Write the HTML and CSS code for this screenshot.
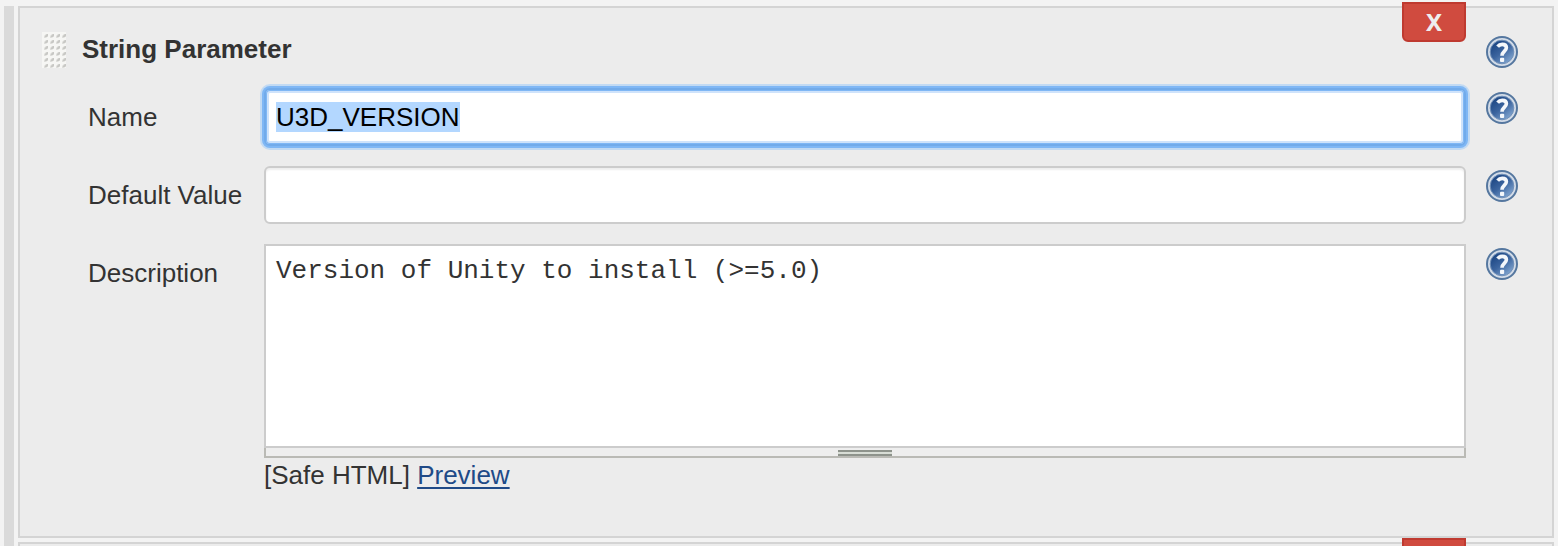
FILE: index.html
```html
<!DOCTYPE html>
<html lang="en">
<head>
<meta charset="utf-8">
<title>String Parameter</title>
<link rel="stylesheet" href="styles.css">
</head>
<body>
<svg class="defs" width="0" height="0" aria-hidden="true">
  <defs>
    <linearGradient id="blue" x1="0.1" y1="0" x2="0.9" y2="1">
      <stop offset="0.15" stop-color="#204a87"/><stop offset="0.5" stop-color="#3c659f"/><stop offset="0.95" stop-color="#86aad4"/>
    </linearGradient>
    <symbol id="help" viewBox="0 0 32 32">
      <circle cx="16" cy="16" r="15" fill="#d3dce8" stroke="#55779f" stroke-width="2"/>
      <circle cx="16" cy="16" r="11.8" fill="url(#blue)" stroke="#7190b8" stroke-width="1"/>
      <path d="M11.6 10.6C12.8 9.1 14.4 8.4 16.2 8.4C18.8 8.4 20.4 9.7 20.4 11.8C20.4 15 16 15.4 16 19.8" fill="none" stroke="#f4f7fb" stroke-width="3.6"/>
      <rect x="14" y="21.8" width="4.2" height="4.2" rx="1" fill="#f4f7fb"/>
    </symbol>
    <pattern id="dots" width="6" height="6" patternUnits="userSpaceOnUse">
      <rect width="6" height="6" fill="#f6f6f4"/>
      <path d="M2 4L4 2H6V4L4 6H2Z" fill="#dededb"/><path d="M3 4L5 2H6V4L5 5H3Z" fill="#c8c8c5"/>
    </pattern>
  </defs>
</svg>
<div class="page">
  <div class="rail"></div>
  <main class="cards">
    <section class="card">
      <button class="remove">X</button>
      <header class="head">
        <svg class="grip"><rect width="24" height="36" fill="url(#dots)"/></svg>
        <h1 class="title">String Parameter</h1>
        <svg class="help"><use href="#help"/></svg>
      </header>
      <div class="row">
        <div class="label">Name</div>
        <div class="input focused"><span class="selected">U3D_VERSION</span></div>
        <svg class="help"><use href="#help"/></svg>
      </div>
      <div class="row">
        <div class="label">Default Value</div>
        <div class="input"></div>
        <svg class="help"><use href="#help"/></svg>
      </div>
      <div class="row">
        <div class="label">Description</div>
        <div class="editor">
          <div class="textarea">Version of Unity to install (&gt;=5.0)</div>
          <div class="resizer"><span class="handle"></span></div>
          <div class="formats">[Safe HTML] <a class="link" href="#">Preview</a></div>
        </div>
        <svg class="help"><use href="#help"/></svg>
      </div>
    </section>
    <section class="card next">
      <button class="remove" aria-label="Remove"></button>
    </section>
  </main>
</div>
</body>
</html>
```
FILE: styles.css
```css
* { box-sizing: border-box; }
body {
  margin: 0;
  height: 546px;
  overflow: hidden;
  background: #f3f3f3;
  color: #333;
  font: 26px/30px "Liberation Sans", Arial, sans-serif;
}
.defs { position: absolute; }
.page { display: flex; gap: 4px; padding: 6px 4px 0; height: 546px; }
.rail { width: 10px; background: #dadada; }
.cards { flex: 1; display: flex; flex-direction: column; gap: 4px; }
.card {
  position: relative;
  flex: none;
  height: 532px;
  border: 2px solid #d4d4d4;
  background: #ececec;
}
.next { height: 4px; border-bottom: 0; }
.next .remove { height: 8px; border-bottom: 0; border-radius: 0; }
.remove {
  position: absolute;
  top: -6px;
  right: 86px;
  width: 64px;
  height: 40px;
  padding: 0;
  border: 2px solid #bf3a30;
  border-radius: 0 0 6px 6px;
  background: #d04b3f;
  color: #eee;
  font: bold 24px/34px "Noto Sans", "Open Sans", sans-serif;
}
.head {
  display: flex;
  align-items: flex-start;
  height: 80px;
  padding: 24px 34px 0 22px;
}
.grip { width: 24px; height: 36px; }
.title { flex: 1; margin: 2px 0 0 16px; font-size: 26px; line-height: 30px; }
.head .help { margin-top: 4px; }
.help { width: 32px; height: 32px; }
.row {
  display: grid;
  grid-template-columns: 176px 1202px 32px;
  padding-left: 68px;
  margin-bottom: 20px;
}
.row .help { margin: 4px 0 0 20px; }
.label { padding-top: 14px; }
.input {
  height: 58px;
  padding: 12px 10px;
  border: 2px solid #ccc;
  border-radius: 6px;
  background: #fff;
  box-shadow: inset 0 2px 2px rgba(0, 0, 0, .07);
}
.focused {
  border-color: #72abea;
  box-shadow: 0 0 0 2px #7fb7f5, 0 0 0 4px #c2daf3, inset 0 0 0 1px #7fb7f5, inset 0 0 0 3px #cfe3fb;
}
.selected { display: inline-block; height: 30px; background: #b3d7ff; color: #000; }
.textarea {
  height: 204px;
  padding: 10px;
  border: 2px solid #ccc;
  background: #fff;
  font: 26px/30px "Liberation Mono", "Courier New", monospace;
}
.resizer {
  display: flex;
  justify-content: center;
  height: 10px;
  padding-top: 2px;
  border: solid #babab5;
  border-width: 0 2px 2px;
  background: #eee;
}
.handle {
  width: 54px;
  height: 6px;
  border-top: 2px solid #8e938c;
  border-bottom: 2px solid #8e938c;
  background: #d8ddd6;
}
.formats { padding-top: 2px; }
.link { color: #204a87; text-decoration-thickness: 2px; text-underline-offset: 3px; }
```
